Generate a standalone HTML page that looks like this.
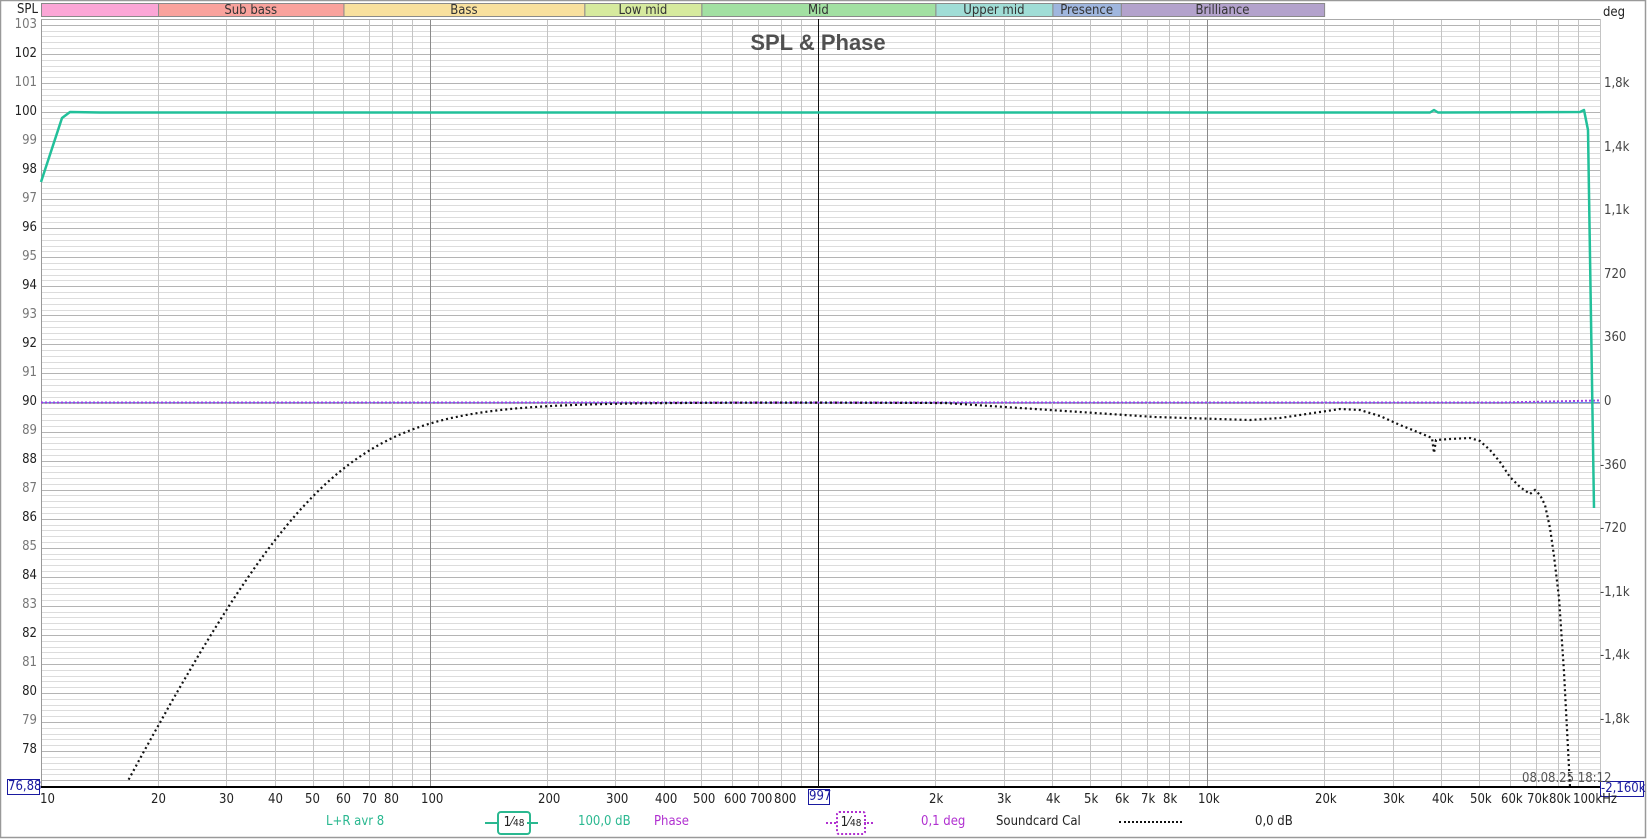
<!DOCTYPE html>
<html><head><meta charset="utf-8"><style>
html,body{margin:0;padding:0;background:#fff;width:1647px;height:840px;overflow:hidden}
#c{position:absolute;left:0;top:0}
.t{position:absolute;font-family:"Liberation Sans Narrow","DejaVu Sans Condensed","Liberation Sans",sans-serif;font-size:13px;line-height:14px;white-space:nowrap}
</style></head><body>
<svg id="c" width="1647" height="840" xmlns="http://www.w3.org/2000/svg" font-family="Liberation Sans Narrow, DejaVu Sans Condensed, Liberation Sans, sans-serif">
<g id="grid"></g>
<g id="bands"></g>
<text x="818" y="50" text-anchor="middle" font-family="Liberation Sans, sans-serif" font-weight="bold" font-size="22" fill="#505050">SPL &amp; Phase</text>
<g id="curves"></g>
</svg>
<div class="t" style="left:17px;top:3px;color:#222">SPL</div>
<div class="t" style="left:1603px;top:6px;color:#222">deg</div>
<div class="t" style="left:1604px;top:77px;color:#444">1,8k</div>
<div class="t" style="left:1604px;top:141px;color:#444">1,4k</div>
<div class="t" style="left:1604px;top:204px;color:#444">1,1k</div>
<div class="t" style="left:1604px;top:268px;color:#444">720</div>
<div class="t" style="left:1604px;top:331px;color:#444">360</div>
<div class="t" style="left:1604px;top:395px;color:#444">0</div>
<div class="t" style="left:1600px;top:459px;color:#444">-360</div>
<div class="t" style="left:1600px;top:522px;color:#444">-720</div>
<div class="t" style="left:1600px;top:586px;color:#444">-1,1k</div>
<div class="t" style="left:1600px;top:649px;color:#444">-1,4k</div>
<div class="t" style="left:1600px;top:713px;color:#444">-1,8k</div>
<div class="t" style="left:7px;top:779px;width:31px;height:14px;border:1px solid #1a1aa0;color:#1a1aa0;background:#fff;text-align:center">76,88</div>
<div class="t" style="left:1600px;top:781px;width:42px;height:14px;border:1px solid #1a1aa0;color:#1a1aa0;background:#fff;text-align:center">-2,160k</div>
<div class="t" style="left:808px;top:789px;width:20px;height:14px;border:1px solid #1a1aa0;color:#1a1aa0;background:#fff;text-align:center">997</div>
<div class="t" style="left:1522px;top:772px;color:#555">08.08.25 18:12</div>
<div class="t" style="left:326px;top:815px;color:#2ab890">L+R avr 8</div>
<div class="t" style="left:578px;top:815px;color:#2ab890">100,0 dB</div>
<div class="t" style="left:654px;top:815px;color:#b030d0">Phase</div>
<div class="t" style="left:921px;top:815px;color:#b030d0">0,1 deg</div>
<div class="t" style="left:996px;top:815px;color:#222">Soundcard Cal</div>
<div class="t" style="left:1255px;top:815px;color:#222">0,0 dB</div>
<div class="t" style="left:497px;top:811px;width:30px;height:20px;border:2px solid #2ab890;border-radius:4px;color:#222;text-align:center;line-height:20px">1⁄<span style="font-size:10px">48</span></div>
<div style="position:absolute;left:485px;top:822px;width:12px;height:2px;background:#2ab890"></div>
<div style="position:absolute;left:527px;top:822px;width:11px;height:2px;background:#2ab890"></div>
<div class="t" style="left:836px;top:811px;width:26px;height:20px;border:2px dotted #b030d0;border-radius:3px;color:#222;text-align:center;line-height:20px">1⁄<span style="font-size:10px">48</span></div>
<div style="position:absolute;left:826px;top:822px;width:10px;border-top:2px dotted #b030d0"></div>
<div style="position:absolute;left:864px;top:822px;width:9px;border-top:2px dotted #b030d0"></div>
<div style="position:absolute;left:1119px;top:821px;width:63px;border-top:2px dotted #111"></div>
<script>
var NS="http://www.w3.org/2000/svg";
function X(f){return 41+388.7*Math.log10(f/10);}
function Y(v){return 112+(100-v)*29.05;}
function el(p,t,a){var e=document.createElementNS(NS,t);for(var k in a)e.setAttribute(k,a[k]);p.appendChild(e);return e;}
var g=document.getElementById('grid');
var L=41,R=1600,T=19,B=787;
el(g,'rect',{x:0.5,y:0.5,width:1645,height:837,fill:'none',stroke:'#999','stroke-width':1.5});
for(var i=0;;i++){var v=103.2-i*0.2;var y=Y(v);if(y>B)break;if(y<T)continue;var maj=Math.abs(v-Math.round(v))<0.01;
el(g,'line',{x1:L,x2:R,y1:Math.round(y)+0.5,y2:Math.round(y)+0.5,stroke:maj?'#b4b4b4':'#dcdcdc','stroke-width':1});}
[10,100,1000,10000].forEach(function(d){for(var m=1;m<=9;m++){var f=d*m;var x=Math.round(X(f))+0.5;
el(g,'line',{x1:x,x2:x,y1:T,y2:B,stroke:m==1&&d>10?'#8a8a8a':'#c4c4c4','stroke-width':1});}});
el(g,'line',{x1:R+0.5,x2:R+0.5,y1:T,y2:B,stroke:'#c4c4c4'});
el(g,'line',{x1:L+0.5,x2:L+0.5,y1:T,y2:B,stroke:'#999'});
el(g,'line',{x1:L,x2:R,y1:T+0.5,y2:T+0.5,stroke:'#aaa'});
el(g,'line',{x1:L,x2:R,y1:B,y2:B,stroke:'#000','stroke-width':2});
var bg=document.getElementById('bands');
var bands=[[10,20,'#fba6d6',''],[20,60,'#f9a29c','Sub bass'],[60,250,'#f8e09e','Bass'],[250,500,'#d6ea9e','Low mid'],[500,2000,'#a2e0a2','Mid'],[2000,4000,'#a0ddd6','Upper mid'],[4000,6000,'#9fb6de','Presence'],[6000,20000,'#b3a2cc','Brilliance']];
bands.forEach(function(b){var x1=X(b[0]),x2=X(b[1]);el(bg,'rect',{x:x1+0.5,y:3.5,width:x2-x1,height:13,fill:b[2],stroke:'#8a8a8a','stroke-width':1});
if(b[3]){var t=el(bg,'text',{x:(x1+x2)/2,y:14,'text-anchor':'middle','font-size':13,fill:'#333'});t.textContent=b[3];}});
el(g,'line',{x1:818.5,x2:818.5,y1:T,y2:B,stroke:'#111','stroke-width':1});
var cg=document.getElementById('curves');
el(cg,'line',{x1:L,x2:R,y1:402.5,y2:402.5,stroke:'#6f8fe6','stroke-width':1});
el(cg,'path',{d:'M41 402.5 L1500 402.5 L1600 400.5',fill:'none',stroke:'#a040e0','stroke-width':2,'stroke-dasharray':'2 2'});
el(cg,'path',{d:'M41 182 L62 118 L70 112 L100 112.5 L1430 112.5 L1434 110 L1438 112.5 L1580 112 L1584 110 L1588 130 L1594 508',fill:'none',stroke:'#22c09a','stroke-width':2.5,'stroke-linejoin':'round'});
var pts=[];
for(var lf=Math.log10(16.8);lf<=Math.log10(1000);lf+=0.01){var f=Math.pow(10,lf);var dv=-10*Math.log10(1+Math.pow(52/f,2.6));var y=Y(90+dv);if(y>787)y=787;pts.push([X(f).toFixed(1),y.toFixed(1)]);}
pts=pts.concat([[945,403],[1050,410],[1155,417],[1250,420],[1280,418],[1320,412],[1340,409],[1360,410],[1380,416],[1400,425],[1420,433],[1432,438],[1434,453],[1436,440],[1450,439],[1470,438],[1480,441],[1490,450],[1500,462],[1510,477],[1520,487],[1530,494],[1535,490],[1540,495],[1545,505],[1550,528],[1554,556],[1559,598],[1564,672],[1570,787]]);
var d='M'+pts.map(function(p){return p[0]+' '+p[1];}).join(' L');
el(cg,'path',{d:d,fill:'none',stroke:'#111','stroke-width':2.2,'stroke-dasharray':'2 3'});
</script>
<div class="t" style="left:0;top:18px;width:37px;text-align:right;color:#777">103</div>
<div class="t" style="left:0;top:47px;width:37px;text-align:right;color:#222">102</div>
<div class="t" style="left:0;top:76px;width:37px;text-align:right;color:#777">101</div>
<div class="t" style="left:0;top:105px;width:37px;text-align:right;color:#222">100</div>
<div class="t" style="left:0;top:134px;width:37px;text-align:right;color:#777">99</div>
<div class="t" style="left:0;top:163px;width:37px;text-align:right;color:#222">98</div>
<div class="t" style="left:0;top:192px;width:37px;text-align:right;color:#777">97</div>
<div class="t" style="left:0;top:221px;width:37px;text-align:right;color:#222">96</div>
<div class="t" style="left:0;top:250px;width:37px;text-align:right;color:#777">95</div>
<div class="t" style="left:0;top:279px;width:37px;text-align:right;color:#222">94</div>
<div class="t" style="left:0;top:308px;width:37px;text-align:right;color:#777">93</div>
<div class="t" style="left:0;top:337px;width:37px;text-align:right;color:#222">92</div>
<div class="t" style="left:0;top:366px;width:37px;text-align:right;color:#777">91</div>
<div class="t" style="left:0;top:395px;width:37px;text-align:right;color:#222">90</div>
<div class="t" style="left:0;top:424px;width:37px;text-align:right;color:#777">89</div>
<div class="t" style="left:0;top:453px;width:37px;text-align:right;color:#222">88</div>
<div class="t" style="left:0;top:482px;width:37px;text-align:right;color:#777">87</div>
<div class="t" style="left:0;top:511px;width:37px;text-align:right;color:#222">86</div>
<div class="t" style="left:0;top:540px;width:37px;text-align:right;color:#777">85</div>
<div class="t" style="left:0;top:569px;width:37px;text-align:right;color:#222">84</div>
<div class="t" style="left:0;top:598px;width:37px;text-align:right;color:#777">83</div>
<div class="t" style="left:0;top:627px;width:37px;text-align:right;color:#222">82</div>
<div class="t" style="left:0;top:656px;width:37px;text-align:right;color:#777">81</div>
<div class="t" style="left:0;top:685px;width:37px;text-align:right;color:#222">80</div>
<div class="t" style="left:0;top:714px;width:37px;text-align:right;color:#777">79</div>
<div class="t" style="left:0;top:743px;width:37px;text-align:right;color:#222">78</div>
<div class="t" style="left:40px;top:793px;color:#222">10</div>
<div class="t" style="left:151px;top:793px;color:#222">20</div>
<div class="t" style="left:219px;top:793px;color:#222">30</div>
<div class="t" style="left:268px;top:793px;color:#222">40</div>
<div class="t" style="left:305px;top:793px;color:#222">50</div>
<div class="t" style="left:336px;top:793px;color:#222">60</div>
<div class="t" style="left:362px;top:793px;color:#222">70</div>
<div class="t" style="left:384px;top:793px;color:#222">80</div>
<div class="t" style="left:421px;top:793px;color:#222">100</div>
<div class="t" style="left:538px;top:793px;color:#222">200</div>
<div class="t" style="left:606px;top:793px;color:#222">300</div>
<div class="t" style="left:655px;top:793px;color:#222">400</div>
<div class="t" style="left:693px;top:793px;color:#222">500</div>
<div class="t" style="left:724px;top:793px;color:#222">600</div>
<div class="t" style="left:750px;top:793px;color:#222">700</div>
<div class="t" style="left:774px;top:793px;color:#222">800</div>
<div class="t" style="left:929px;top:793px;color:#222">2k</div>
<div class="t" style="left:997px;top:793px;color:#222">3k</div>
<div class="t" style="left:1046px;top:793px;color:#222">4k</div>
<div class="t" style="left:1084px;top:793px;color:#222">5k</div>
<div class="t" style="left:1115px;top:793px;color:#222">6k</div>
<div class="t" style="left:1141px;top:793px;color:#222">7k</div>
<div class="t" style="left:1163px;top:793px;color:#222">8k</div>
<div class="t" style="left:1198px;top:793px;color:#222">10k</div>
<div class="t" style="left:1315px;top:793px;color:#222">20k</div>
<div class="t" style="left:1383px;top:793px;color:#222">30k</div>
<div class="t" style="left:1432px;top:793px;color:#222">40k</div>
<div class="t" style="left:1470px;top:793px;color:#222">50k</div>
<div class="t" style="left:1501px;top:793px;color:#222">60k</div>
<div class="t" style="left:1527px;top:793px;color:#222">70k</div>
<div class="t" style="left:1549px;top:793px;color:#222">80k</div>
<div class="t" style="left:1573px;top:793px;color:#222">100kHz</div>
</body></html>
